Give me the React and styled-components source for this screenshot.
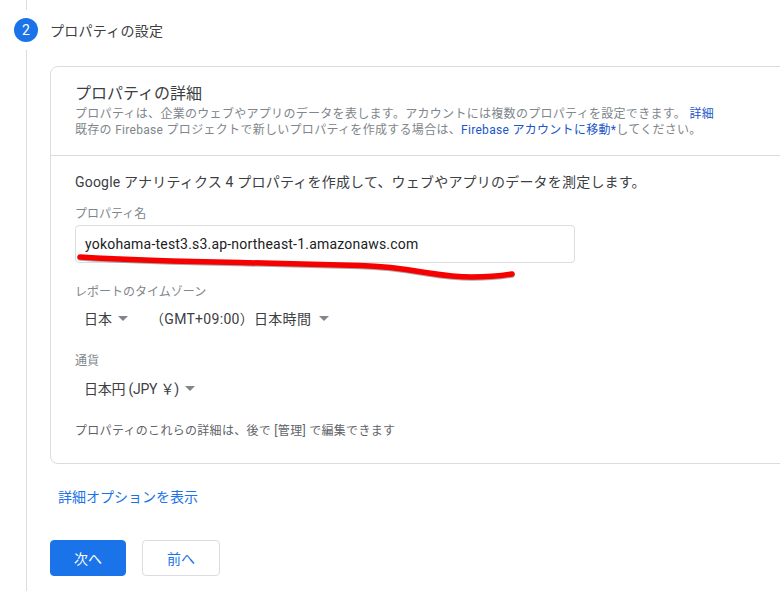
import React from "react";
import styled, { createGlobalStyle } from "styled-components";

const Global = createGlobalStyle`
  html, body { margin: 0; padding: 0; background: #fff; overflow: hidden; }
  body { font-family: Roboto, "Noto Sans CJK JP", sans-serif; color: #3c4043; }
`;

const Page = styled.div`
  position: relative;
  width: 780px;
  height: 591px;
  overflow: hidden;
  background: #fff;
`;

const StepRow = styled.div`
  display: flex;
  flex-direction: column;
  height: 591px;
`;

const RailTop = styled.div`
  width: 1px;
  height: 10px;
  margin-left: 26px;
  background: #dadce0;
`;

const StepHeader = styled.div`
  display: flex;
  align-items: center;
  height: 40px;
  padding-left: 14px;
  gap: 12px;
`;

const StepBadge = styled.div`
  width: 24px;
  height: 24px;
  border-radius: 50%;
  background: #1a73e8;
  color: #fff;
  font-size: 14px;
  display: flex;
  align-items: center;
  justify-content: center;
`;

const StepTitle = styled.div`
  font-size: 14px;
  letter-spacing: 0.25px;
  color: #3c4043;
`;

const StepBody = styled.div`
  flex: 1;
  margin-left: 26px;
  border-left: 1px solid #dadce0;
  padding: 16px 0 0 23px;
`;

const Card = styled.div`
  width: 800px;
  height: 398px;
  box-sizing: border-box;
  border: 1px solid #dadce0;
  border-radius: 8px;
  background: #fff;
`;

const CardHead = styled.div`
  height: 89px;
  box-sizing: border-box;
  padding: 16px 24px 0;
  border-bottom: 1px solid #dadce0;
`;

const CardTitle = styled.div`
  font-size: 16px;
  line-height: 21px;
  margin-bottom: 2px;
  color: #3c4043;
`;

const CardSub = styled.div`
  font-size: 12px;
  letter-spacing: 0.3px;
  line-height: 16px;
  color: #80868b;
  white-space: nowrap;
`;

const Link = styled.span`
  color: #1a56c8;
`;

const CardBody = styled.div`
  padding: 16px 24px 0;
`;

const Lead = styled.div`
  font-size: 14px;
  letter-spacing: 0.2px;
  line-height: 20px;
  color: #3c4043;
`;

const FieldLabel = styled.div`
  font-size: 12px;
  line-height: 16px;
  color: #80868b;
  margin-top: ${(p) => p.$top}px;
`;

const TextBox = styled.div`
  width: 500px;
  height: 38px;
  box-sizing: border-box;
  margin-top: 3px;
  padding: 0 9px;
  display: flex;
  align-items: center;
  border: 1px solid #dadce0;
  border-radius: 4px;
  font-size: 14px;
  letter-spacing: 0.2px;
  color: #202124;
`;

const SelectRow = styled.div`
  display: flex;
  align-items: center;
  height: 20px;
  margin-top: ${(p) => p.$top}px;
  padding-left: 9px;
  gap: 22px;
`;

const Select = styled.div`
  display: flex;
  align-items: center;
  gap: ${(p) => p.$gap || 6}px;
  font-size: 14px;
  letter-spacing: ${(p) => p.$spacing || 0}px;
  color: #3c4043;
  white-space: nowrap;
`;

const Caret = styled.span`
  width: 0;
  height: 0;
  border-left: 5px solid transparent;
  border-right: 5px solid transparent;
  border-top: 5px solid #80868b;
`;

const Note = styled.div`
  margin-top: 25px;
  font-size: 12px;
  letter-spacing: 0.3px;
  line-height: 16px;
  color: #5f6368;
`;

const MoreLink = styled.div`
  margin: 24px 0 0 8px;
  font-size: 14px;
  line-height: 18px;
  color: #1a73e8;
`;

const Actions = styled.div`
  display: flex;
  gap: 16px;
  margin-top: 34px;
`;

const Button = styled.div`
  width: ${(p) => p.$w}px;
  height: 36px;
  box-sizing: border-box;
  display: flex;
  align-items: center;
  justify-content: center;
  border-radius: 4px;
  font-size: 14px;
  background: ${(p) => (p.$primary ? "#1a73e8" : "#fff")};
  color: ${(p) => (p.$primary ? "#fff" : "#1a73e8")};
  border: 1px solid ${(p) => (p.$primary ? "#1a73e8" : "#dadce0")};
`;

const Scribble = styled.svg`
  position: absolute;
  left: 0;
  top: 0;
  pointer-events: none;
`;

const strokePath =
  "M80 257 C120 259.5 180 261.5 240 262.5 C290 263.5 330 264.5 360 265.5 C385 266 405 269 427 272.7 C445 275.5 458 277 472 277 C488 277 500 276 512 274";

export default function App() {
  return (
    <Page>
      <Global />
      <StepRow>
        <RailTop />
        <StepHeader>
          <StepBadge>2</StepBadge>
          <StepTitle>プロパティの設定</StepTitle>
        </StepHeader>
        <StepBody>
          <Card>
            <CardHead>
              <CardTitle>プロパティの詳細</CardTitle>
              <CardSub>
                プロパティは、企業のウェブやアプリのデータを表します。アカウントには複数のプロパティを設定できます。 <Link>詳細</Link>
              </CardSub>
              <CardSub>
                既存の Firebase プロジェクトで新しいプロパティを作成する場合は、<Link>Firebase アカウントに移動*</Link>してください。
              </CardSub>
            </CardHead>
            <CardBody>
              <Lead>Google アナリティクス 4 プロパティを作成して、ウェブやアプリのデータを測定します。</Lead>
              <FieldLabel $top={14}>プロパティ名</FieldLabel>
              <TextBox>yokohama-test3.s3.ap-northeast-1.amazonaws.com</TextBox>
              <FieldLabel $top={21}>レポートのタイムゾーン</FieldLabel>
              <SelectRow $top={8}>
                <Select>日本<Caret /></Select>
                <Select $spacing={0.3} $gap={8}>（GMT+09:00）日本時間<Caret /></Select>
              </SelectRow>
              <FieldLabel $top={25}>通貨</FieldLabel>
              <SelectRow $top={9}>
                <Select $spacing={-0.25}>日本円 (JPY ￥)<Caret /></Select>
              </SelectRow>
              <Note>プロパティのこれらの詳細は、後で [管理] で編集できます</Note>
            </CardBody>
          </Card>
          <MoreLink>詳細オプションを表示</MoreLink>
          <Actions>
            <Button $primary $w={76}>次へ</Button>
            <Button $w={78}>前へ</Button>
          </Actions>
        </StepBody>
      </StepRow>
      <Scribble width="780" height="591" viewBox="0 0 780 591">
        <path d={strokePath} transform="translate(0 1)" fill="none" stroke="#555" strokeOpacity="0.5" strokeWidth="5.5" strokeLinecap="round" />
        <path d={strokePath} fill="none" stroke="#f60000" strokeWidth="5.5" strokeLinecap="round" />
      </Scribble>
    </Page>
  );
}
